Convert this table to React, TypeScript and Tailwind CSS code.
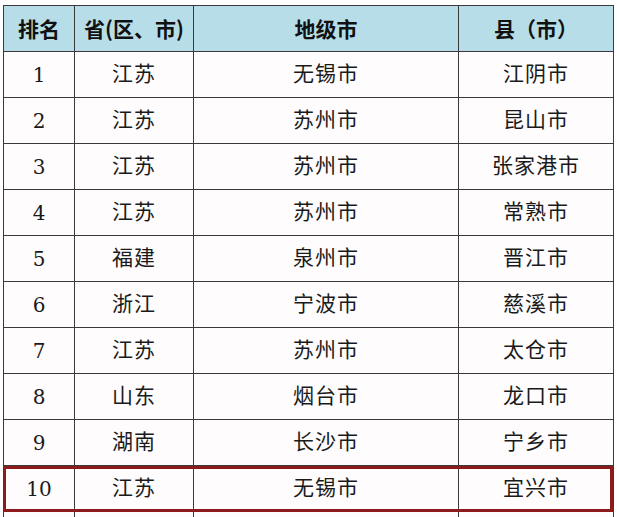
const rows: [string, string, string, string][] = [
  ["1", "江苏", "无锡市", "江阴市"],
  ["2", "江苏", "苏州市", "昆山市"],
  ["3", "江苏", "苏州市", "张家港市"],
  ["4", "江苏", "苏州市", "常熟市"],
  ["5", "福建", "泉州市", "晋江市"],
  ["6", "浙江", "宁波市", "慈溪市"],
  ["7", "江苏", "苏州市", "太仓市"],
  ["8", "山东", "烟台市", "龙口市"],
  ["9", "湖南", "长沙市", "宁乡市"],
  ["10", "江苏", "无锡市", "宜兴市"],
  ["", "", "", ""],
];

const cell = "border border-[#3a3a3a] text-center align-middle p-0";

export default function App() {
  return (
    <div className="w-[617px] h-[517px] overflow-hidden bg-white pt-[5px] pl-[3px]">
      <div className="relative w-[610px]">
        <table className="w-[610px] table-fixed border-collapse text-[#1a1a1a] font-['Liberation_Serif','Noto_Sans_CJK_SC',serif]">
          <colgroup>
            <col className="w-[71px]" />
            <col className="w-[119px]" />
            <col className="w-[265px]" />
            <col className="w-[155px]" />
          </colgroup>
          <thead>
            <tr className="h-[46px] bg-[#b7dee8] text-[21px] font-bold text-[#111] font-['Noto_Sans_CJK_SC',sans-serif]">
              <th className={cell}>排名</th>
              <th className={cell}>省(区、市)</th>
              <th className={cell}>地级市</th>
              <th className={cell}>县（市）</th>
            </tr>
          </thead>
          <tbody>
            {rows.map((r, i) => (
              <tr key={i} className="h-[46px] text-[21px] bg-[#fefcfd]">
                <td className={`${cell} text-[20px] font-['DejaVu_Serif',serif]`}>{r[0]}</td>
                <td className={`${cell} tracking-[1px]`}>{r[1]}</td>
                <td className={`${cell} tracking-[1px]`}>{r[2]}</td>
                <td className={`${cell} tracking-[1px]`}>{r[3]}</td>
              </tr>
            ))}
          </tbody>
        </table>
        <div className="absolute left-[0px] top-[461px] w-[610px] h-[46px] border-[3px] border-[#8e1b1b] pointer-events-none" />
      </div>
    </div>
  );
}
